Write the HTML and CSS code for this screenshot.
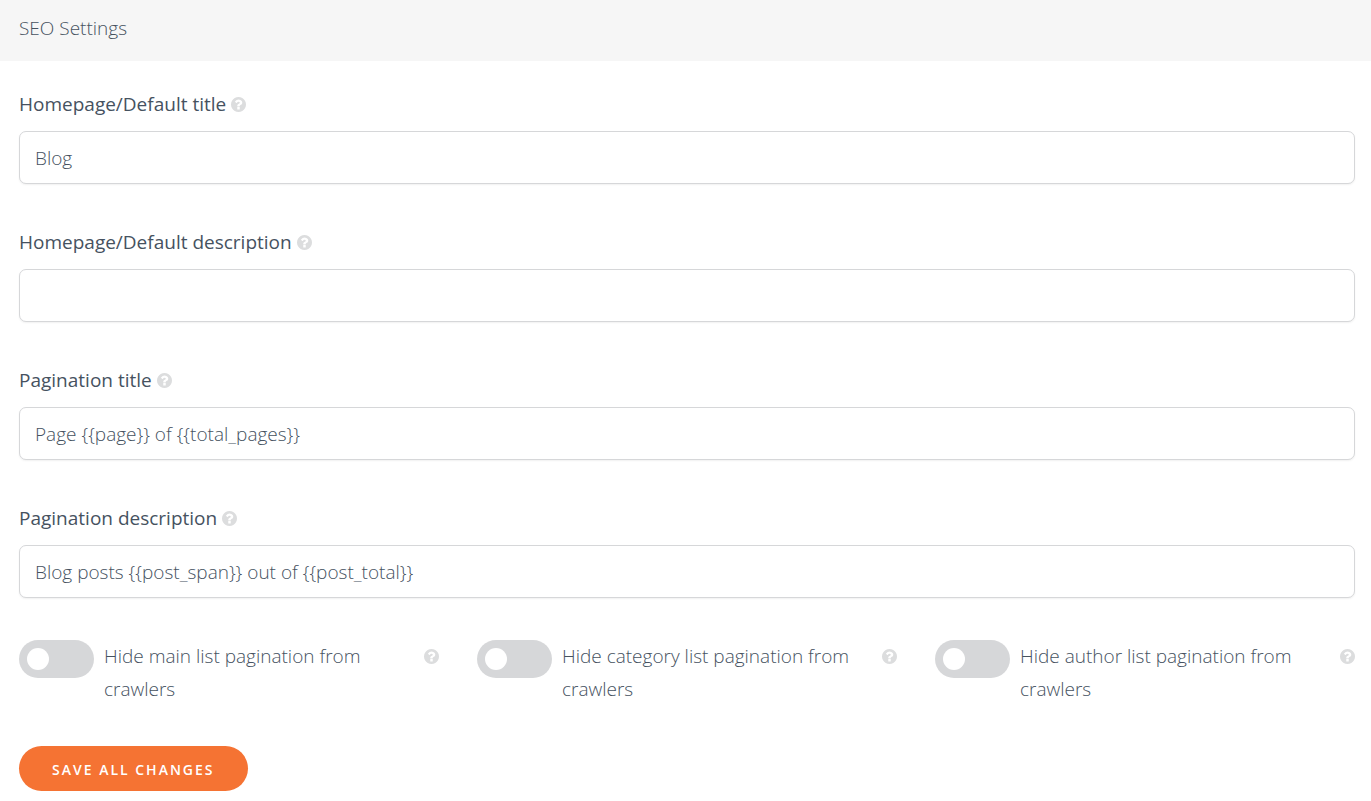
FILE: index.html
```html
<!DOCTYPE html>
<html lang="en">
<head>
    <meta charset="UTF-8">
    <meta name="viewport" content="width=device-width, initial-scale=1.0">
    <title>SEO Settings</title>
    <link rel="stylesheet" href="styles.css">
</head>
<body>
    <!-- shared help icon -->
    <svg class="sprite" aria-hidden="true">
        <symbol id="help" viewBox="128 128 1536 1536">
            <path d="M1024 1376v-192q0-14-9-23t-23-9h-192q-14 0-23 9t-9 23v192q0 14 9 23t23 9h192q14 0 23-9t9-23zm256-672q0-88-55.500-163t-138.500-116-170-41q-243 0-371 213-15 24 8 42l132 100q7 6 19 6 16 0 25-12 53-68 86-92 34-24 86-24 48 0 85.500 26t37.500 59q0 38-20 61t-68 45q-63 28-115.500 86.500t-52.500 125.500v36q0 14 9 23t23 9h192q14 0 23-9t9-23q0-19 21.500-49.500t54.500-49.500q32-18 49-28.500t46-35 44.500-48 28-60.500 12.500-81zm384 192q0 209-103 385.500t-279.500 279.500-385.500 103-385.500-103-279.500-279.500-103-385.500 103-385.500 279.500-279.500 385.500-103 385.500 103 279.500 279.500 103 385.500z"/>
        </symbol>
    </svg>

    <header class="panel-header">
        <h1>SEO Settings</h1>
    </header>

    <form class="settings">
        <div class="field">
            <div class="field-label">
                <label for="home-title">Homepage/Default title</label>
                <svg class="help"><use href="#help"/></svg>
            </div>
            <input type="text" id="home-title" value="Blog">
        </div>
        <div class="field">
            <div class="field-label">
                <label for="home-desc">Homepage/Default description</label>
                <svg class="help"><use href="#help"/></svg>
            </div>
            <input type="text" id="home-desc">
        </div>
        <div class="field">
            <div class="field-label">
                <label for="page-title">Pagination title</label>
                <svg class="help"><use href="#help"/></svg>
            </div>
            <input type="text" id="page-title" value="Page {{page}} of {{total_pages}}">
        </div>
        <div class="field">
            <div class="field-label">
                <label for="page-desc">Pagination description</label>
                <svg class="help"><use href="#help"/></svg>
            </div>
            <input type="text" id="page-desc" value="Blog posts {{post_span}} out of {{post_total}}">
        </div>

        <div class="toggles">
            <div class="toggle">
                <input type="checkbox" id="hide-main">
                <label for="hide-main">Hide main list pagination from crawlers</label>
                <svg class="help"><use href="#help"/></svg>
            </div>
            <div class="toggle">
                <input type="checkbox" id="hide-category">
                <label for="hide-category">Hide category list pagination from crawlers</label>
                <svg class="help"><use href="#help"/></svg>
            </div>
            <div class="toggle">
                <input type="checkbox" id="hide-author">
                <label for="hide-author">Hide author list pagination from crawlers</label>
                <svg class="help"><use href="#help"/></svg>
            </div>
        </div>

        <button type="submit" class="save-btn">Save all changes</button>
    </form>
</body>
</html>
```
FILE: styles.css
```css
* {
    box-sizing: border-box;
}

body {
    margin: 0;
    font-family: "Open Sans", sans-serif;
    font-size: 19px;
    font-weight: 300;
    line-height: 33px;
    color: #46525f;
    background-color: #fff;
}

.sprite {
    display: none;
}

.panel-header {
    padding: 12px 19px 16px;
    background-color: #f6f6f6;
}

.panel-header h1 {
    margin: 0;
    font-size: 19px;
    font-weight: 300;
}

.settings {
    padding: 27px 16px 10px 19px;
}

.field {
    margin-bottom: 42px;
}

.field-label {
    display: flex;
    align-items: center;
    gap: 5px;
    margin-bottom: 10px;
    font-weight: 400;
}

.help {
    flex: none;
    width: 15px;
    height: 15px;
    fill: #dcddde;
}

input[type="text"] {
    display: block;
    width: 100%;
    height: 53px;
    padding: 0 15px;
    border: 1px solid #d6d7d9;
    border-radius: 7px;
    box-shadow: 0 1px 2px rgba(0, 0, 0, 0.06);
    background-color: #fff;
    color: #46525f;
    font-family: inherit;
    font-size: 19px;
    font-weight: 300;
}

.toggles {
    display: grid;
    grid-template-columns: repeat(3, 1fr);
    gap: 38px;
    margin-bottom: 40px;
}

.toggle {
    display: flex;
    align-items: flex-start;
}

.toggle input {
    appearance: none;
    flex: none;
    display: flex;
    align-items: center;
    width: 75px;
    height: 38px;
    margin: 0 10px 0 0;
    padding: 0 8px;
    border-radius: 19px;
    background-color: #d6d7d9;
    cursor: pointer;
}

/* knob */
.toggle input::before {
    content: "";
    width: 22px;
    height: 22px;
    border-radius: 50%;
    background-color: #fff;
}

.toggle input:checked {
    justify-content: flex-end;
    background-color: #f57333;
}

.toggle label {
    flex: 1;
    padding-right: 20px;
}

.toggle .help {
    margin-top: 9px;
}

.save-btn {
    height: 45px;
    padding: 2px 33px 0;
    border: none;
    border-radius: 23px;
    background-color: #f57333;
    color: #fff;
    font-family: inherit;
    font-size: 14px;
    font-weight: 600;
    letter-spacing: 2px;
    text-transform: uppercase;
    cursor: pointer;
}
```
